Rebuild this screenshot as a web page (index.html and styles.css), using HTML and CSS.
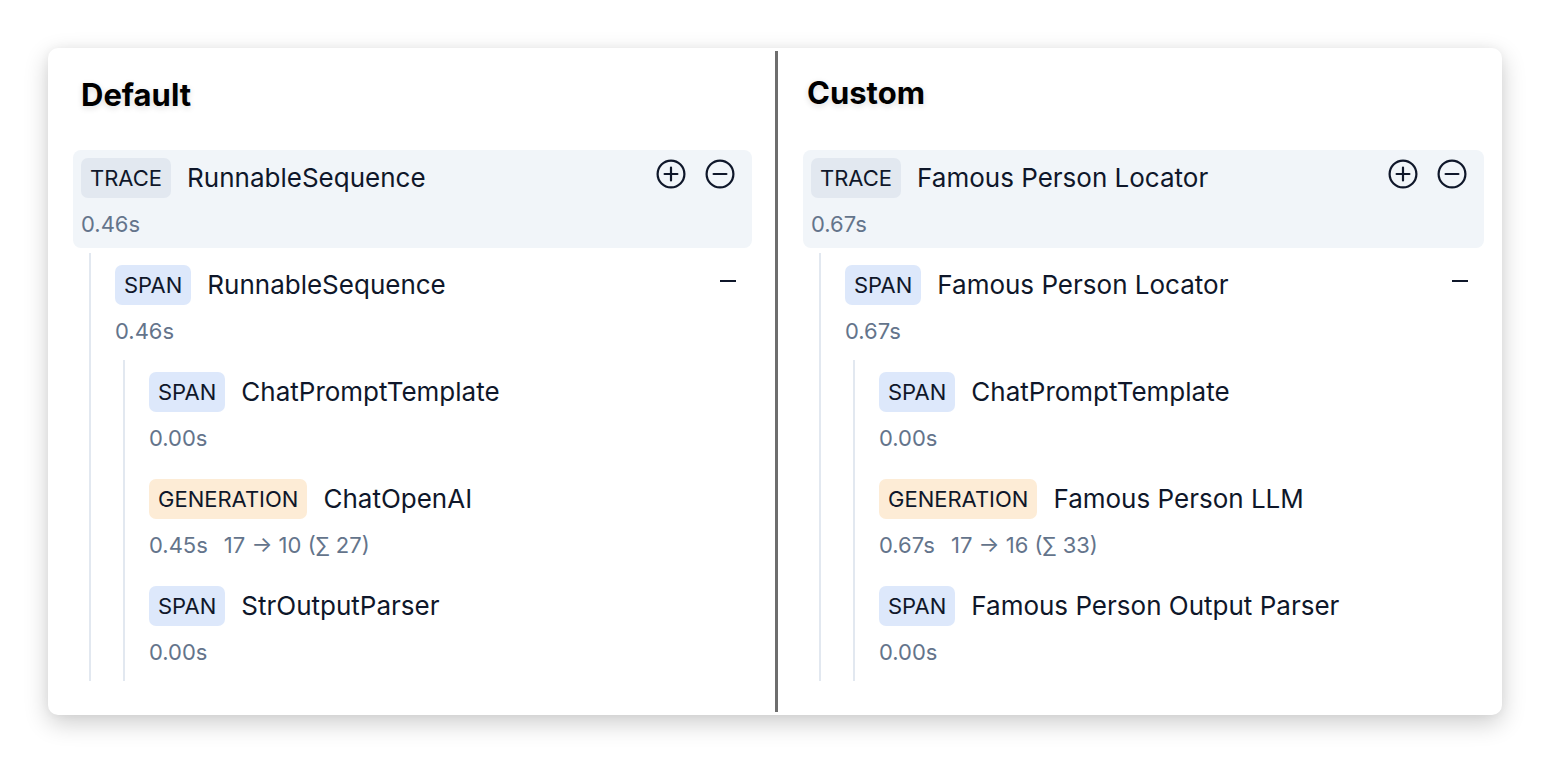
FILE: index.html
```html
<!DOCTYPE html>
<html lang="en">
<head>
<meta charset="utf-8">
<title>Trace comparison</title>
<link rel="stylesheet" href="styles.css">
</head>
<body>
<div class="card">
  <section class="col col-left">
    <h2 class="title title-left">Default</h2>
    <div class="node">
      <div class="head head-trace">
        <div class="row">
          <span class="badge badge-trace">TRACE</span>
          <span class="name">RunnableSequence</span>
          <span class="actions">
            <svg class="icon" viewBox="0 0 30 30"><circle cx="15" cy="15" r="13.4"/><path d="M15 8.6v12.8M8.6 15h12.8"/></svg>
            <svg class="icon" viewBox="0 0 30 30"><circle cx="15" cy="15" r="13.4"/><path d="M8.6 15h12.8"/></svg>
          </span>
        </div>
        <div class="meta">0.46s</div>
      </div>
      <div class="children">
        <div class="node">
          <div class="head">
            <div class="row">
              <span class="badge badge-span">SPAN</span>
              <span class="name">RunnableSequence</span>
              <span class="collapse"></span>
            </div>
            <div class="meta">0.46s</div>
          </div>
          <div class="children children-inner">
            <div class="node">
              <div class="head">
                <div class="row"><span class="badge badge-span">SPAN</span><span class="name">ChatPromptTemplate</span></div>
                <div class="meta">0.00s</div>
              </div>
            </div>
            <div class="node">
              <div class="head">
                <div class="row"><span class="badge badge-gen">GENERATION</span><span class="name">ChatOpenAI</span></div>
                <div class="meta"><span>0.45s</span><span>17 → 10 (∑ 27)</span></div>
              </div>
            </div>
            <div class="node">
              <div class="head">
                <div class="row"><span class="badge badge-span">SPAN</span><span class="name">StrOutputParser</span></div>
                <div class="meta">0.00s</div>
              </div>
            </div>
          </div>
        </div>
      </div>
    </div>
  </section>
  <div class="divider"></div>
  <section class="col col-right">
    <h2 class="title title-right">Custom</h2>
    <div class="node">
      <div class="head head-trace">
        <div class="row">
          <span class="badge badge-trace">TRACE</span>
          <span class="name">Famous Person Locator</span>
          <span class="actions">
            <svg class="icon" viewBox="0 0 30 30"><circle cx="15" cy="15" r="13.4"/><path d="M15 8.6v12.8M8.6 15h12.8"/></svg>
            <svg class="icon" viewBox="0 0 30 30"><circle cx="15" cy="15" r="13.4"/><path d="M8.6 15h12.8"/></svg>
          </span>
        </div>
        <div class="meta">0.67s</div>
      </div>
      <div class="children">
        <div class="node">
          <div class="head">
            <div class="row">
              <span class="badge badge-span">SPAN</span>
              <span class="name">Famous Person Locator</span>
              <span class="collapse"></span>
            </div>
            <div class="meta">0.67s</div>
          </div>
          <div class="children children-inner">
            <div class="node">
              <div class="head">
                <div class="row"><span class="badge badge-span">SPAN</span><span class="name">ChatPromptTemplate</span></div>
                <div class="meta">0.00s</div>
              </div>
            </div>
            <div class="node">
              <div class="head">
                <div class="row"><span class="badge badge-gen">GENERATION</span><span class="name">Famous Person LLM</span></div>
                <div class="meta"><span>0.67s</span><span>17 → 16 (∑ 33)</span></div>
              </div>
            </div>
            <div class="node">
              <div class="head">
                <div class="row"><span class="badge badge-span">SPAN</span><span class="name">Famous Person Output Parser</span></div>
                <div class="meta">0.00s</div>
              </div>
            </div>
          </div>
        </div>
      </div>
    </div>
  </section>
</div>
</body>
</html>
```

FILE: styles.css
```css
* { box-sizing: border-box; }

html, body {
  margin: 0;
  padding: 0;
  background: #ffffff;
}

html { height: 100%; }

body {
  min-height: 100%;
  font-family: Inter, "Noto Sans", "Liberation Sans", sans-serif;
  color: #0f172a;
  padding: 48px 0 0 48px;
}

.card {
  width: 1454px;
  height: 667px;
  background: #ffffff;
  border-radius: 10px;
  box-shadow: 0 8px 24px rgba(0, 0, 0, 0.2), 0 0 10px rgba(0, 0, 0, 0.04);
  display: flex;
  align-items: stretch;
}

.col {
  padding-top: 29px;
}

.col-left {
  width: 727px;
  padding-left: 25px;
  padding-right: 23px;
}

.col-right {
  flex: 1;
  padding-left: 25px;
  padding-right: 18px;
}

.divider {
  width: 3px;
  margin: 3px 0;
  background: #6e6e6e;
}

.title {
  margin: 0 0 38px 0;
  font-size: 31px;
  line-height: 35px;
  font-weight: 700;
  color: #000000;
  text-shadow: 0 2px 6px rgba(0, 0, 0, 0.14);
}

.title-left { padding-left: 8px; }
.title-right { padding-left: 4px; margin-top: -2px; margin-bottom: 40px; }

.head {
  padding: 8px 8px 10px 8px;
  border-radius: 8px;
}

.head-trace {
  background: #f1f5f9;
}

.row {
  display: flex;
  align-items: center;
  gap: 16px;
  height: 40px;
}

.badge {
  display: inline-block;
  height: 40px;
  line-height: 40px;
  padding: 0 9px;
  font-size: 22px;
  border-radius: 7px;
  color: #0f172a;
}

.badge-trace { background: #e2e8f0; }
.badge-span { background: #dde8fb; }
.badge-gen { background: #fdecd6; }

.name {
  font-size: 26px;
  line-height: 32px;
  color: #0f172a;
}

.meta {
  margin-top: 12px;
  font-size: 22px;
  line-height: 28px;
  color: #64748b;
  display: flex;
  gap: 16px;
}

.actions {
  margin-left: auto;
  margin-right: 9px;
  align-self: flex-start;
  margin-top: 1px;
  display: flex;
  gap: 19px;
}

.icon {
  width: 30px;
  height: 30px;
  fill: none;
  stroke: #0f172a;
  stroke-width: 2.2;
  stroke-linecap: round;
}

.collapse {
  margin-left: auto;
  margin-right: 8px;
  align-self: flex-start;
  margin-top: 15px;
  width: 16px;
  height: 2px;
  background: #0f172a;
}

.children {
  margin-top: 5px;
  margin-left: 16px;
  border-left: 2px solid #e2e8f0;
  padding: 4px 0 0 16px;
  display: flex;
  flex-direction: column;
  gap: 9px;
}

.children-inner {
  padding-bottom: 5px;
}
```
